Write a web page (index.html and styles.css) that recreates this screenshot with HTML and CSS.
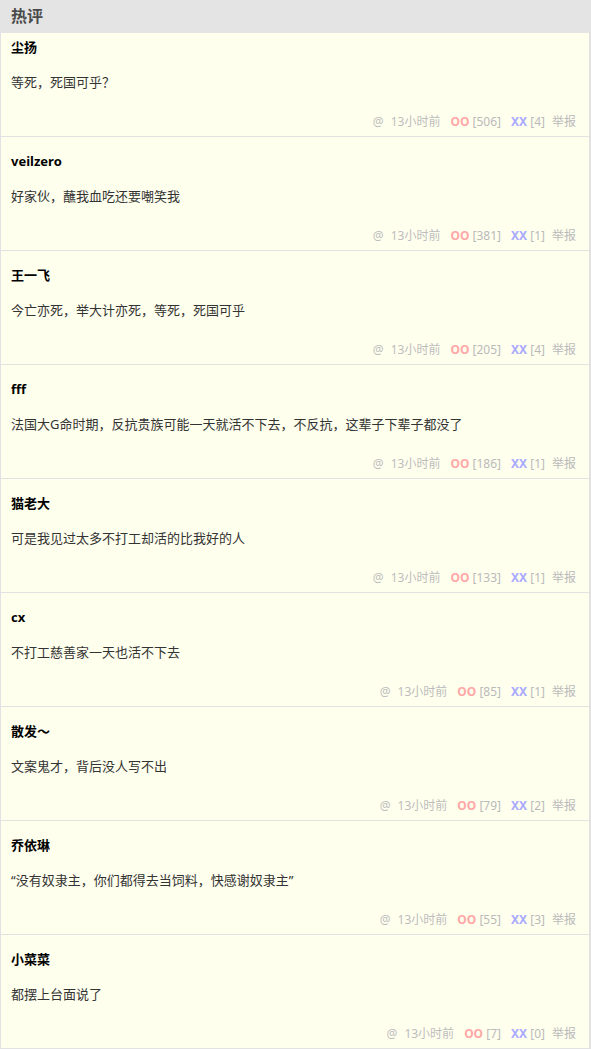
FILE: index.html
```html
<!DOCTYPE html>
<html lang="zh">
<head>
    <meta charset="UTF-8">
    <meta name="viewport" content="width=device-width, initial-scale=1.0">
    <title>热评</title>
    <link rel="stylesheet" href="styles.css">
</head>
<body>
    <div class="hot">
        <h2 class="hot-title">热评</h2>
        <ul class="comments">
            <li class="item">
                <div class="author">尘扬</div>
                <div class="text">等死，死国可乎？</div>
                <div class="meta"><span class="at">@</span><span class="time">13小时前</span><span class="oo">OO</span> <span class="num">[506]</span><span class="xx">XX</span> <span class="num">[4]</span><span class="report">举报</span></div>
            </li>
            <li class="item">
                <div class="author">veilzero</div>
                <div class="text">好家伙，蘸我血吃还要嘲笑我</div>
                <div class="meta"><span class="at">@</span><span class="time">13小时前</span><span class="oo">OO</span> <span class="num">[381]</span><span class="xx">XX</span> <span class="num">[1]</span><span class="report">举报</span></div>
            </li>
            <li class="item">
                <div class="author">王一飞</div>
                <div class="text">今亡亦死，举大计亦死，等死，死国可乎</div>
                <div class="meta"><span class="at">@</span><span class="time">13小时前</span><span class="oo">OO</span> <span class="num">[205]</span><span class="xx">XX</span> <span class="num">[4]</span><span class="report">举报</span></div>
            </li>
            <li class="item">
                <div class="author">fff</div>
                <div class="text">法国大G命时期，反抗贵族可能一天就活不下去，不反抗，这辈子下辈子都没了</div>
                <div class="meta"><span class="at">@</span><span class="time">13小时前</span><span class="oo">OO</span> <span class="num">[186]</span><span class="xx">XX</span> <span class="num">[1]</span><span class="report">举报</span></div>
            </li>
            <li class="item">
                <div class="author">猫老大</div>
                <div class="text">可是我见过太多不打工却活的比我好的人</div>
                <div class="meta"><span class="at">@</span><span class="time">13小时前</span><span class="oo">OO</span> <span class="num">[133]</span><span class="xx">XX</span> <span class="num">[1]</span><span class="report">举报</span></div>
            </li>
            <li class="item">
                <div class="author">cx</div>
                <div class="text">不打工慈善家一天也活不下去</div>
                <div class="meta"><span class="at">@</span><span class="time">13小时前</span><span class="oo">OO</span> <span class="num">[85]</span><span class="xx">XX</span> <span class="num">[1]</span><span class="report">举报</span></div>
            </li>
            <li class="item">
                <div class="author">散发～</div>
                <div class="text">文案鬼才，背后没人写不出</div>
                <div class="meta"><span class="at">@</span><span class="time">13小时前</span><span class="oo">OO</span> <span class="num">[79]</span><span class="xx">XX</span> <span class="num">[2]</span><span class="report">举报</span></div>
            </li>
            <li class="item">
                <div class="author">乔依琳</div>
                <div class="text">“没有奴隶主，你们都得去当饲料，快感谢奴隶主”</div>
                <div class="meta"><span class="at">@</span><span class="time">13小时前</span><span class="oo">OO</span> <span class="num">[55]</span><span class="xx">XX</span> <span class="num">[3]</span><span class="report">举报</span></div>
            </li>
            <li class="item">
                <div class="author">小菜菜</div>
                <div class="text">都摆上台面说了</div>
                <div class="meta"><span class="at">@</span><span class="time">13小时前</span><span class="oo">OO</span> <span class="num">[7]</span><span class="xx">XX</span> <span class="num">[0]</span><span class="report">举报</span></div>
            </li>
        </ul>
    </div>
</body>
</html>
```
FILE: styles.css
```css
body { margin: 0; font-family: "Noto Sans", "Noto Sans CJK SC", sans-serif; font-size: 13px; }
.hot { width: 591px; }
.hot-title { margin: 0; height: 33px; line-height: 33px; padding-left: 11px; background: #e4e4e4; color: #4a4a4a; font-size: 16px; font-weight: bold; }
.comments { list-style: none; margin: 0; padding: 0; }
.item { height: 114px; box-sizing: border-box; padding: 15px 13px 0 10px; background: #ffffee; border-left: 1px solid #e2e2e2; border-right: 2px solid #e2e2e2; border-bottom: 1px solid #e2e2e2; }
.item:first-child { height: 104px; padding-top: 5px; }
.author { height: 18px; line-height: 18px; font-weight: bold; color: #000; }
.text { margin-top: 17px; height: 18px; line-height: 18px; color: #333; white-space: nowrap; }
.meta { margin-top: 22px; height: 18px; line-height: 18px; text-align: right; font-size: 12px; color: #bdbdbd; }
.at { margin-right: 7px; }
.oo { margin-left: 10px; font-weight: bold; color: #ffa8a8; }
.xx { margin-left: 10px; font-weight: bold; color: #aaaaff; }
.num { color: #bababa; }
.report { margin-left: 7px; color: #bababa; }
```
